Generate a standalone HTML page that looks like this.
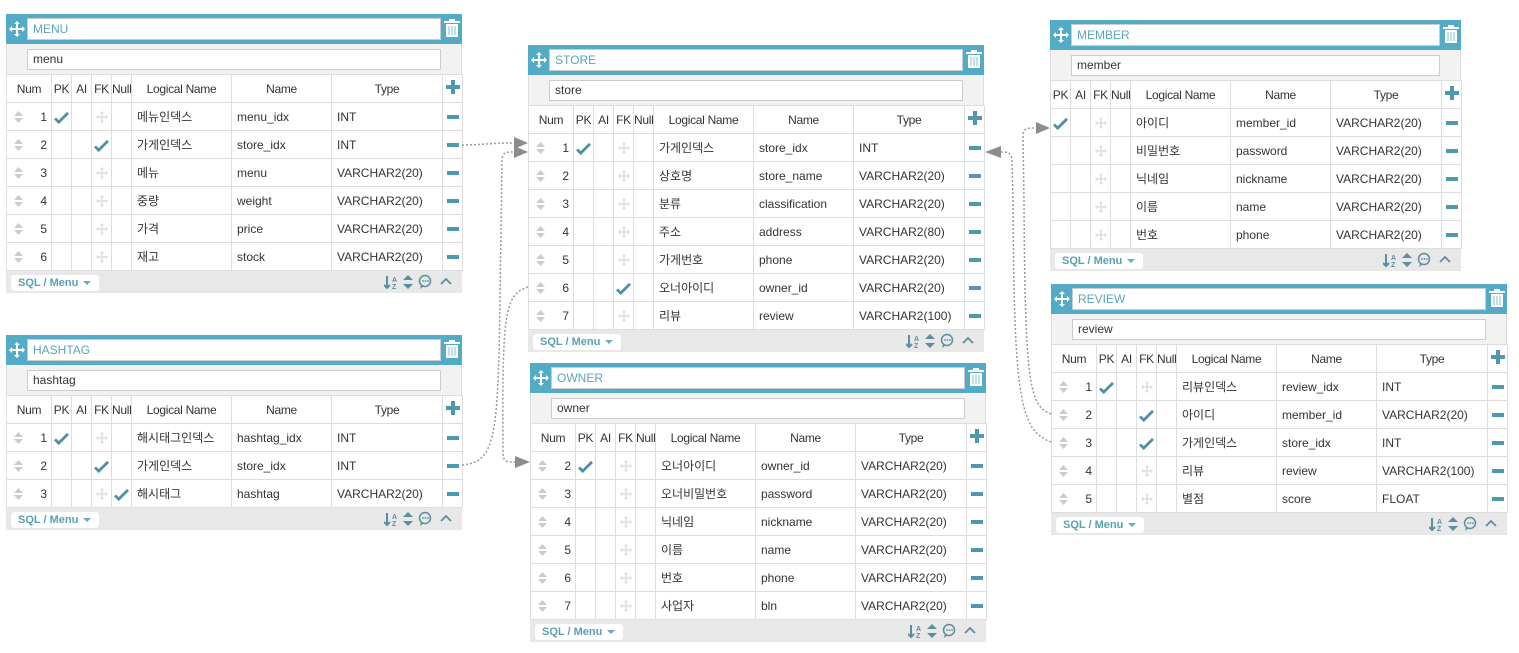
<!DOCTYPE html>
<html><head><meta charset="utf-8">
<style>
body{margin:0;width:1519px;height:653px;background:#fff;position:relative;overflow:hidden;font-family:"Liberation Sans","Noto Sans CJK KR",sans-serif}
.t{position:absolute;font-size:12px;color:#333;background:#fff}
.hd{height:30px;background:#53abc6;position:relative}
.hd .mv{position:absolute;left:3px;top:7px}
.hd .tr{position:absolute;right:2px;top:5px}
.ti{position:absolute;left:21px;right:21px;top:4px;height:20px;background:#fff;border:1px solid #ccc;color:#5aa5bd;padding-left:5px;line-height:20px;font-size:12px;box-sizing:content-box}
.nm{height:30px;background:#f2f2f2;position:relative;border-left:1px solid #ddd;border-right:1px solid #ddd;box-sizing:border-box}
.ni{position:absolute;left:20px;right:20px;top:5px;height:19px;border:1px solid #ccc;background:#fff;line-height:19px;padding-left:5px}
table{border-collapse:collapse;table-layout:fixed}
td{height:28px;border:1px solid #ddd;padding:0 0 0 5px;white-space:nowrap;overflow:hidden;box-sizing:border-box}
tr.h td{text-align:center;padding:0;overflow:visible;letter-spacing:-0.3px}
td.n{position:relative;text-align:right;padding-right:4px}
td.n svg{position:absolute;left:7px;top:8px}
td.i{text-align:center;padding:0}
td.i svg{vertical-align:middle}
.ft{height:22px;background:#e8e8e8;position:relative}
.bt{position:absolute;left:5px;top:4px;height:16px;width:88px;background:#fff;border-radius:3px;color:#5a9fb5;font-size:11px;font-weight:bold;line-height:16px;padding-left:7px;box-sizing:border-box}
.bt:after{content:"";position:absolute;left:72px;top:6px;border:4px solid transparent;border-top:4px solid #6aaabf}
.fi{position:absolute;right:6px;top:3px}
</style></head><body>
<svg width="0" height="0" style="position:absolute">
<defs>
<symbol id="mv" viewBox="0 0 16 16"><path d="M8 0L11 3H9V7H13V5L16 8L13 11V9H9V13H11L8 16L5 13H7V9H3V11L0 8L3 5V7H7V3H5Z" fill="currentColor"/></symbol>
<symbol id="tr" viewBox="0 0 16 18"><rect x="0" y="2" width="16" height="2" fill="#fff"/><rect x="5" y="0" width="6" height="2" fill="#fff"/><path d="M2 5H14V18H2Z" fill="#fff"/><path d="M5 7V16M8 7V16M11 7V16" stroke="#9bcfdf" stroke-width="1.3"/></symbol>
<symbol id="ck" viewBox="0 0 16 14"><path d="M1 8L5 12L15 2" fill="none" stroke="#4f8fa5" stroke-width="3"/></symbol>
<symbol id="so" viewBox="0 0 9 12"><path d="M4.5 0L9 5H0ZM4.5 12L0 7H9Z" fill="#ccc"/></symbol>
<symbol id="fi" viewBox="0 0 72 16"><path d="M3 2V14M0 11L3 14L6 11" stroke="#5a8ea0" stroke-width="2" fill="none"/><text x="8" y="8" font-size="7" fill="#5a8ea0" font-family="Liberation Sans" font-weight="bold">A</text><text x="8" y="15" font-size="7" fill="#5a8ea0" font-family="Liberation Sans" font-weight="bold">Z</text><path d="M24 1L29 6H19ZM24 15L19 10H29Z" fill="#5a8ea0"/><circle cx="41" cy="7" r="5.5" fill="none" stroke="#5a8ea0" stroke-width="1.5"/><path d="M37 11L36 15L40 12" fill="#5a8ea0"/><circle cx="39" cy="7" r="0.9" fill="#5a8ea0"/><circle cx="41.5" cy="7" r="0.9" fill="#5a8ea0"/><circle cx="44" cy="7" r="0.9" fill="#5a8ea0"/><path d="M57 10L62 5L67 10" fill="none" stroke="#5a8ea0" stroke-width="1.8"/></symbol>
</defs></svg>

<svg width="1519" height="653" style="position:absolute;left:0;top:0;z-index:5;pointer-events:none">
<g fill="none" stroke="#999" stroke-width="1.5" stroke-dasharray="2,2">
<path d="M462 145 C480 145 490 143 514 143"/>
<path d="M462 465 C495 462 498 440 500 300 L502 160 C503 152 505 152 514 152"/>
<path d="M528 287 C505 295 502 310 503 450 C503 462 505 462 515 462"/>
<path d="M1051 414 C1030 405 1025 390 1024 200 L1023 135 C1023 128 1028 128 1036 128"/>
<path d="M1051 442 C1020 430 1014 400 1013 200 L1012 160 C1011 152 1008 152 1000 152"/>
</g>
<g fill="#8c8c8c">
<path d="M514 137L528 143L514 149Z"/><path d="M514 146L528 152L514 158Z"/>
<path d="M515 456L530 462L515 468Z"/>
<path d="M1036 122L1050 128L1036 134Z"/>
<path d="M1001 146L985 152L1001 158Z"/>
</g></svg>

<!-- MENU -->
<div class="t" style="left:6px;top:14px;width:456px">
<div class="hd"><svg class="mv" width="16" height="16" style="color:#fff"><use href="#mv"/></svg><div class="ti">MENU</div><svg class="tr" width="16" height="18"><use href="#tr"/></svg></div>
<div class="nm"><div class="ni">menu</div></div>
<table style="width:456px">
<colgroup><col style="width:45px"><col style="width:20px"><col style="width:20px"><col style="width:20px"><col style="width:20px"><col style="width:100px"><col style="width:100px"><col style="width:111px"><col style="width:20px"></colgroup>
<tr class="h"><td>Num</td><td>PK</td><td>AI</td><td>FK</td><td>Null</td><td>Logical Name</td><td>Name</td><td>Type</td><td><svg width="14" height="14"><path d="M5 0H9V5H14V9H9V14H5V9H0V5H5Z" fill="#4f98ae"/></svg></td></tr>
<tr><td class="n"><svg width="9" height="12"><use href="#so"/></svg>1</td><td class="i"><svg width="15" height="13"><use href="#ck"/></svg></td><td></td><td class="i"><svg width="12" height="12" style="color:#ddd"><use href="#mv"/></svg></td><td></td><td>메뉴인덱스</td><td>menu_idx</td><td>INT</td><td class="i"><svg width="12" height="4"><rect width="12" height="4" fill="#4f98ae"/></svg></td></tr>
<tr><td class="n"><svg width="9" height="12"><use href="#so"/></svg>2</td><td></td><td></td><td class="i"><svg width="15" height="13"><use href="#ck"/></svg></td><td></td><td>가게인덱스</td><td>store_idx</td><td>INT</td><td class="i"><svg width="12" height="4"><rect width="12" height="4" fill="#4f98ae"/></svg></td></tr>
<tr><td class="n"><svg width="9" height="12"><use href="#so"/></svg>3</td><td></td><td></td><td class="i"><svg width="12" height="12" style="color:#ddd"><use href="#mv"/></svg></td><td></td><td>메뉴</td><td>menu</td><td>VARCHAR2(20)</td><td class="i"><svg width="12" height="4"><rect width="12" height="4" fill="#4f98ae"/></svg></td></tr>
<tr><td class="n"><svg width="9" height="12"><use href="#so"/></svg>4</td><td></td><td></td><td class="i"><svg width="12" height="12" style="color:#ddd"><use href="#mv"/></svg></td><td></td><td>중량</td><td>weight</td><td>VARCHAR2(20)</td><td class="i"><svg width="12" height="4"><rect width="12" height="4" fill="#4f98ae"/></svg></td></tr>
<tr><td class="n"><svg width="9" height="12"><use href="#so"/></svg>5</td><td></td><td></td><td class="i"><svg width="12" height="12" style="color:#ddd"><use href="#mv"/></svg></td><td></td><td>가격</td><td>price</td><td>VARCHAR2(20)</td><td class="i"><svg width="12" height="4"><rect width="12" height="4" fill="#4f98ae"/></svg></td></tr>
<tr><td class="n"><svg width="9" height="12"><use href="#so"/></svg>6</td><td></td><td></td><td class="i"><svg width="12" height="12" style="color:#ddd"><use href="#mv"/></svg></td><td></td><td>재고</td><td>stock</td><td>VARCHAR2(20)</td><td class="i"><svg width="12" height="4"><rect width="12" height="4" fill="#4f98ae"/></svg></td></tr>
</table>
<div class="ft"><div class="bt">SQL / Menu</div><svg class="fi" width="72" height="16"><use href="#fi"/></svg></div>
</div>

<!-- HASHTAG -->
<div class="t" style="left:6px;top:335px;width:456px">
<div class="hd"><svg class="mv" width="16" height="16" style="color:#fff"><use href="#mv"/></svg><div class="ti">HASHTAG</div><svg class="tr" width="16" height="18"><use href="#tr"/></svg></div>
<div class="nm"><div class="ni">hashtag</div></div>
<table style="width:456px">
<colgroup><col style="width:45px"><col style="width:20px"><col style="width:20px"><col style="width:20px"><col style="width:20px"><col style="width:100px"><col style="width:100px"><col style="width:111px"><col style="width:20px"></colgroup>
<tr class="h"><td>Num</td><td>PK</td><td>AI</td><td>FK</td><td>Null</td><td>Logical Name</td><td>Name</td><td>Type</td><td><svg width="14" height="14"><path d="M5 0H9V5H14V9H9V14H5V9H0V5H5Z" fill="#4f98ae"/></svg></td></tr>
<tr><td class="n"><svg width="9" height="12"><use href="#so"/></svg>1</td><td class="i"><svg width="15" height="13"><use href="#ck"/></svg></td><td></td><td class="i"><svg width="12" height="12" style="color:#ddd"><use href="#mv"/></svg></td><td></td><td>해시태그인덱스</td><td>hashtag_idx</td><td>INT</td><td class="i"><svg width="12" height="4"><rect width="12" height="4" fill="#4f98ae"/></svg></td></tr>
<tr><td class="n"><svg width="9" height="12"><use href="#so"/></svg>2</td><td></td><td></td><td class="i"><svg width="15" height="13"><use href="#ck"/></svg></td><td></td><td>가게인덱스</td><td>store_idx</td><td>INT</td><td class="i"><svg width="12" height="4"><rect width="12" height="4" fill="#4f98ae"/></svg></td></tr>
<tr><td class="n"><svg width="9" height="12"><use href="#so"/></svg>3</td><td></td><td></td><td class="i"><svg width="12" height="12" style="color:#ddd"><use href="#mv"/></svg></td><td class="i"><svg width="15" height="13"><use href="#ck"/></svg></td><td>해시태그</td><td>hashtag</td><td>VARCHAR2(20)</td><td class="i"><svg width="12" height="4"><rect width="12" height="4" fill="#4f98ae"/></svg></td></tr>
</table>
<div class="ft"><div class="bt">SQL / Menu</div><svg class="fi" width="72" height="16"><use href="#fi"/></svg></div>
</div>

<!-- STORE -->
<div class="t" style="left:528px;top:45px;width:456px">
<div class="hd"><svg class="mv" width="16" height="16" style="color:#fff"><use href="#mv"/></svg><div class="ti">STORE</div><svg class="tr" width="16" height="18"><use href="#tr"/></svg></div>
<div class="nm"><div class="ni">store</div></div>
<table style="width:456px">
<colgroup><col style="width:45px"><col style="width:20px"><col style="width:20px"><col style="width:20px"><col style="width:20px"><col style="width:100px"><col style="width:100px"><col style="width:111px"><col style="width:20px"></colgroup>
<tr class="h"><td>Num</td><td>PK</td><td>AI</td><td>FK</td><td>Null</td><td>Logical Name</td><td>Name</td><td>Type</td><td><svg width="14" height="14"><path d="M5 0H9V5H14V9H9V14H5V9H0V5H5Z" fill="#4f98ae"/></svg></td></tr>
<tr><td class="n"><svg width="9" height="12"><use href="#so"/></svg>1</td><td class="i"><svg width="15" height="13"><use href="#ck"/></svg></td><td></td><td class="i"><svg width="12" height="12" style="color:#ddd"><use href="#mv"/></svg></td><td></td><td>가게인덱스</td><td>store_idx</td><td>INT</td><td class="i"><svg width="12" height="4"><rect width="12" height="4" fill="#4f98ae"/></svg></td></tr>
<tr><td class="n"><svg width="9" height="12"><use href="#so"/></svg>2</td><td></td><td></td><td class="i"><svg width="12" height="12" style="color:#ddd"><use href="#mv"/></svg></td><td></td><td>상호명</td><td>store_name</td><td>VARCHAR2(20)</td><td class="i"><svg width="12" height="4"><rect width="12" height="4" fill="#4f98ae"/></svg></td></tr>
<tr><td class="n"><svg width="9" height="12"><use href="#so"/></svg>3</td><td></td><td></td><td class="i"><svg width="12" height="12" style="color:#ddd"><use href="#mv"/></svg></td><td></td><td>분류</td><td>classification</td><td>VARCHAR2(20)</td><td class="i"><svg width="12" height="4"><rect width="12" height="4" fill="#4f98ae"/></svg></td></tr>
<tr><td class="n"><svg width="9" height="12"><use href="#so"/></svg>4</td><td></td><td></td><td class="i"><svg width="12" height="12" style="color:#ddd"><use href="#mv"/></svg></td><td></td><td>주소</td><td>address</td><td>VARCHAR2(80)</td><td class="i"><svg width="12" height="4"><rect width="12" height="4" fill="#4f98ae"/></svg></td></tr>
<tr><td class="n"><svg width="9" height="12"><use href="#so"/></svg>5</td><td></td><td></td><td class="i"><svg width="12" height="12" style="color:#ddd"><use href="#mv"/></svg></td><td></td><td>가게번호</td><td>phone</td><td>VARCHAR2(20)</td><td class="i"><svg width="12" height="4"><rect width="12" height="4" fill="#4f98ae"/></svg></td></tr>
<tr><td class="n"><svg width="9" height="12"><use href="#so"/></svg>6</td><td></td><td></td><td class="i"><svg width="15" height="13"><use href="#ck"/></svg></td><td></td><td>오너아이디</td><td>owner_id</td><td>VARCHAR2(20)</td><td class="i"><svg width="12" height="4"><rect width="12" height="4" fill="#4f98ae"/></svg></td></tr>
<tr><td class="n"><svg width="9" height="12"><use href="#so"/></svg>7</td><td></td><td></td><td class="i"><svg width="12" height="12" style="color:#ddd"><use href="#mv"/></svg></td><td></td><td>리뷰</td><td>review</td><td>VARCHAR2(100)</td><td class="i"><svg width="12" height="4"><rect width="12" height="4" fill="#4f98ae"/></svg></td></tr>
</table>
<div class="ft"><div class="bt">SQL / Menu</div><svg class="fi" width="72" height="16"><use href="#fi"/></svg></div>
</div>

<!-- OWNER -->
<div class="t" style="left:530px;top:363px;width:456px">
<div class="hd"><svg class="mv" width="16" height="16" style="color:#fff"><use href="#mv"/></svg><div class="ti">OWNER</div><svg class="tr" width="16" height="18"><use href="#tr"/></svg></div>
<div class="nm"><div class="ni">owner</div></div>
<table style="width:456px">
<colgroup><col style="width:45px"><col style="width:20px"><col style="width:20px"><col style="width:20px"><col style="width:20px"><col style="width:100px"><col style="width:100px"><col style="width:111px"><col style="width:20px"></colgroup>
<tr class="h"><td>Num</td><td>PK</td><td>AI</td><td>FK</td><td>Null</td><td>Logical Name</td><td>Name</td><td>Type</td><td><svg width="14" height="14"><path d="M5 0H9V5H14V9H9V14H5V9H0V5H5Z" fill="#4f98ae"/></svg></td></tr>
<tr><td class="n"><svg width="9" height="12"><use href="#so"/></svg>2</td><td class="i"><svg width="15" height="13"><use href="#ck"/></svg></td><td></td><td class="i"><svg width="12" height="12" style="color:#ddd"><use href="#mv"/></svg></td><td></td><td>오너아이디</td><td>owner_id</td><td>VARCHAR2(20)</td><td class="i"><svg width="12" height="4"><rect width="12" height="4" fill="#4f98ae"/></svg></td></tr>
<tr><td class="n"><svg width="9" height="12"><use href="#so"/></svg>3</td><td></td><td></td><td class="i"><svg width="12" height="12" style="color:#ddd"><use href="#mv"/></svg></td><td></td><td>오너비밀번호</td><td>password</td><td>VARCHAR2(20)</td><td class="i"><svg width="12" height="4"><rect width="12" height="4" fill="#4f98ae"/></svg></td></tr>
<tr><td class="n"><svg width="9" height="12"><use href="#so"/></svg>4</td><td></td><td></td><td class="i"><svg width="12" height="12" style="color:#ddd"><use href="#mv"/></svg></td><td></td><td>닉네임</td><td>nickname</td><td>VARCHAR2(20)</td><td class="i"><svg width="12" height="4"><rect width="12" height="4" fill="#4f98ae"/></svg></td></tr>
<tr><td class="n"><svg width="9" height="12"><use href="#so"/></svg>5</td><td></td><td></td><td class="i"><svg width="12" height="12" style="color:#ddd"><use href="#mv"/></svg></td><td></td><td>이름</td><td>name</td><td>VARCHAR2(20)</td><td class="i"><svg width="12" height="4"><rect width="12" height="4" fill="#4f98ae"/></svg></td></tr>
<tr><td class="n"><svg width="9" height="12"><use href="#so"/></svg>6</td><td></td><td></td><td class="i"><svg width="12" height="12" style="color:#ddd"><use href="#mv"/></svg></td><td></td><td>번호</td><td>phone</td><td>VARCHAR2(20)</td><td class="i"><svg width="12" height="4"><rect width="12" height="4" fill="#4f98ae"/></svg></td></tr>
<tr><td class="n"><svg width="9" height="12"><use href="#so"/></svg>7</td><td></td><td></td><td class="i"><svg width="12" height="12" style="color:#ddd"><use href="#mv"/></svg></td><td></td><td>사업자</td><td>bln</td><td>VARCHAR2(20)</td><td class="i"><svg width="12" height="4"><rect width="12" height="4" fill="#4f98ae"/></svg></td></tr>
</table>
<div class="ft"><div class="bt">SQL / Menu</div><svg class="fi" width="72" height="16"><use href="#fi"/></svg></div>
</div>

<!-- MEMBER -->
<div class="t" style="left:1050px;top:20px;width:411px">
<div class="hd"><svg class="mv" width="16" height="16" style="color:#fff"><use href="#mv"/></svg><div class="ti">MEMBER</div><svg class="tr" width="16" height="18"><use href="#tr"/></svg></div>
<div class="nm"><div class="ni">member</div></div>
<table style="width:411px">
<colgroup><col style="width:20px"><col style="width:20px"><col style="width:20px"><col style="width:20px"><col style="width:100px"><col style="width:100px"><col style="width:111px"><col style="width:20px"></colgroup>
<tr class="h"><td>PK</td><td>AI</td><td>FK</td><td>Null</td><td>Logical Name</td><td>Name</td><td>Type</td><td><svg width="14" height="14"><path d="M5 0H9V5H14V9H9V14H5V9H0V5H5Z" fill="#4f98ae"/></svg></td></tr>
<tr><td class="i"><svg width="15" height="13"><use href="#ck"/></svg></td><td></td><td class="i"><svg width="12" height="12" style="color:#ddd"><use href="#mv"/></svg></td><td></td><td>아이디</td><td>member_id</td><td>VARCHAR2(20)</td><td class="i"><svg width="12" height="4"><rect width="12" height="4" fill="#4f98ae"/></svg></td></tr>
<tr><td></td><td></td><td class="i"><svg width="12" height="12" style="color:#ddd"><use href="#mv"/></svg></td><td></td><td>비밀번호</td><td>password</td><td>VARCHAR2(20)</td><td class="i"><svg width="12" height="4"><rect width="12" height="4" fill="#4f98ae"/></svg></td></tr>
<tr><td></td><td></td><td class="i"><svg width="12" height="12" style="color:#ddd"><use href="#mv"/></svg></td><td></td><td>닉네임</td><td>nickname</td><td>VARCHAR2(20)</td><td class="i"><svg width="12" height="4"><rect width="12" height="4" fill="#4f98ae"/></svg></td></tr>
<tr><td></td><td></td><td class="i"><svg width="12" height="12" style="color:#ddd"><use href="#mv"/></svg></td><td></td><td>이름</td><td>name</td><td>VARCHAR2(20)</td><td class="i"><svg width="12" height="4"><rect width="12" height="4" fill="#4f98ae"/></svg></td></tr>
<tr><td></td><td></td><td class="i"><svg width="12" height="12" style="color:#ddd"><use href="#mv"/></svg></td><td></td><td>번호</td><td>phone</td><td>VARCHAR2(20)</td><td class="i"><svg width="12" height="4"><rect width="12" height="4" fill="#4f98ae"/></svg></td></tr>
</table>
<div class="ft"><div class="bt">SQL / Menu</div><svg class="fi" width="72" height="16"><use href="#fi"/></svg></div>
</div>

<!-- REVIEW -->
<div class="t" style="left:1051px;top:284px;width:456px">
<div class="hd"><svg class="mv" width="16" height="16" style="color:#fff"><use href="#mv"/></svg><div class="ti">REVIEW</div><svg class="tr" width="16" height="18"><use href="#tr"/></svg></div>
<div class="nm"><div class="ni">review</div></div>
<table style="width:456px">
<colgroup><col style="width:45px"><col style="width:20px"><col style="width:20px"><col style="width:20px"><col style="width:20px"><col style="width:100px"><col style="width:100px"><col style="width:111px"><col style="width:20px"></colgroup>
<tr class="h"><td>Num</td><td>PK</td><td>AI</td><td>FK</td><td>Null</td><td>Logical Name</td><td>Name</td><td>Type</td><td><svg width="14" height="14"><path d="M5 0H9V5H14V9H9V14H5V9H0V5H5Z" fill="#4f98ae"/></svg></td></tr>
<tr><td class="n"><svg width="9" height="12"><use href="#so"/></svg>1</td><td class="i"><svg width="15" height="13"><use href="#ck"/></svg></td><td></td><td class="i"><svg width="12" height="12" style="color:#ddd"><use href="#mv"/></svg></td><td></td><td>리뷰인덱스</td><td>review_idx</td><td>INT</td><td class="i"><svg width="12" height="4"><rect width="12" height="4" fill="#4f98ae"/></svg></td></tr>
<tr><td class="n"><svg width="9" height="12"><use href="#so"/></svg>2</td><td></td><td></td><td class="i"><svg width="15" height="13"><use href="#ck"/></svg></td><td></td><td>아이디</td><td>member_id</td><td>VARCHAR2(20)</td><td class="i"><svg width="12" height="4"><rect width="12" height="4" fill="#4f98ae"/></svg></td></tr>
<tr><td class="n"><svg width="9" height="12"><use href="#so"/></svg>3</td><td></td><td></td><td class="i"><svg width="15" height="13"><use href="#ck"/></svg></td><td></td><td>가게인덱스</td><td>store_idx</td><td>INT</td><td class="i"><svg width="12" height="4"><rect width="12" height="4" fill="#4f98ae"/></svg></td></tr>
<tr><td class="n"><svg width="9" height="12"><use href="#so"/></svg>4</td><td></td><td></td><td class="i"><svg width="12" height="12" style="color:#ddd"><use href="#mv"/></svg></td><td></td><td>리뷰</td><td>review</td><td>VARCHAR2(100)</td><td class="i"><svg width="12" height="4"><rect width="12" height="4" fill="#4f98ae"/></svg></td></tr>
<tr><td class="n"><svg width="9" height="12"><use href="#so"/></svg>5</td><td></td><td></td><td class="i"><svg width="12" height="12" style="color:#ddd"><use href="#mv"/></svg></td><td></td><td>별점</td><td>score</td><td>FLOAT</td><td class="i"><svg width="12" height="4"><rect width="12" height="4" fill="#4f98ae"/></svg></td></tr>
</table>
<div class="ft"><div class="bt">SQL / Menu</div><svg class="fi" width="72" height="16"><use href="#fi"/></svg></div>
</div>
</body></html>
